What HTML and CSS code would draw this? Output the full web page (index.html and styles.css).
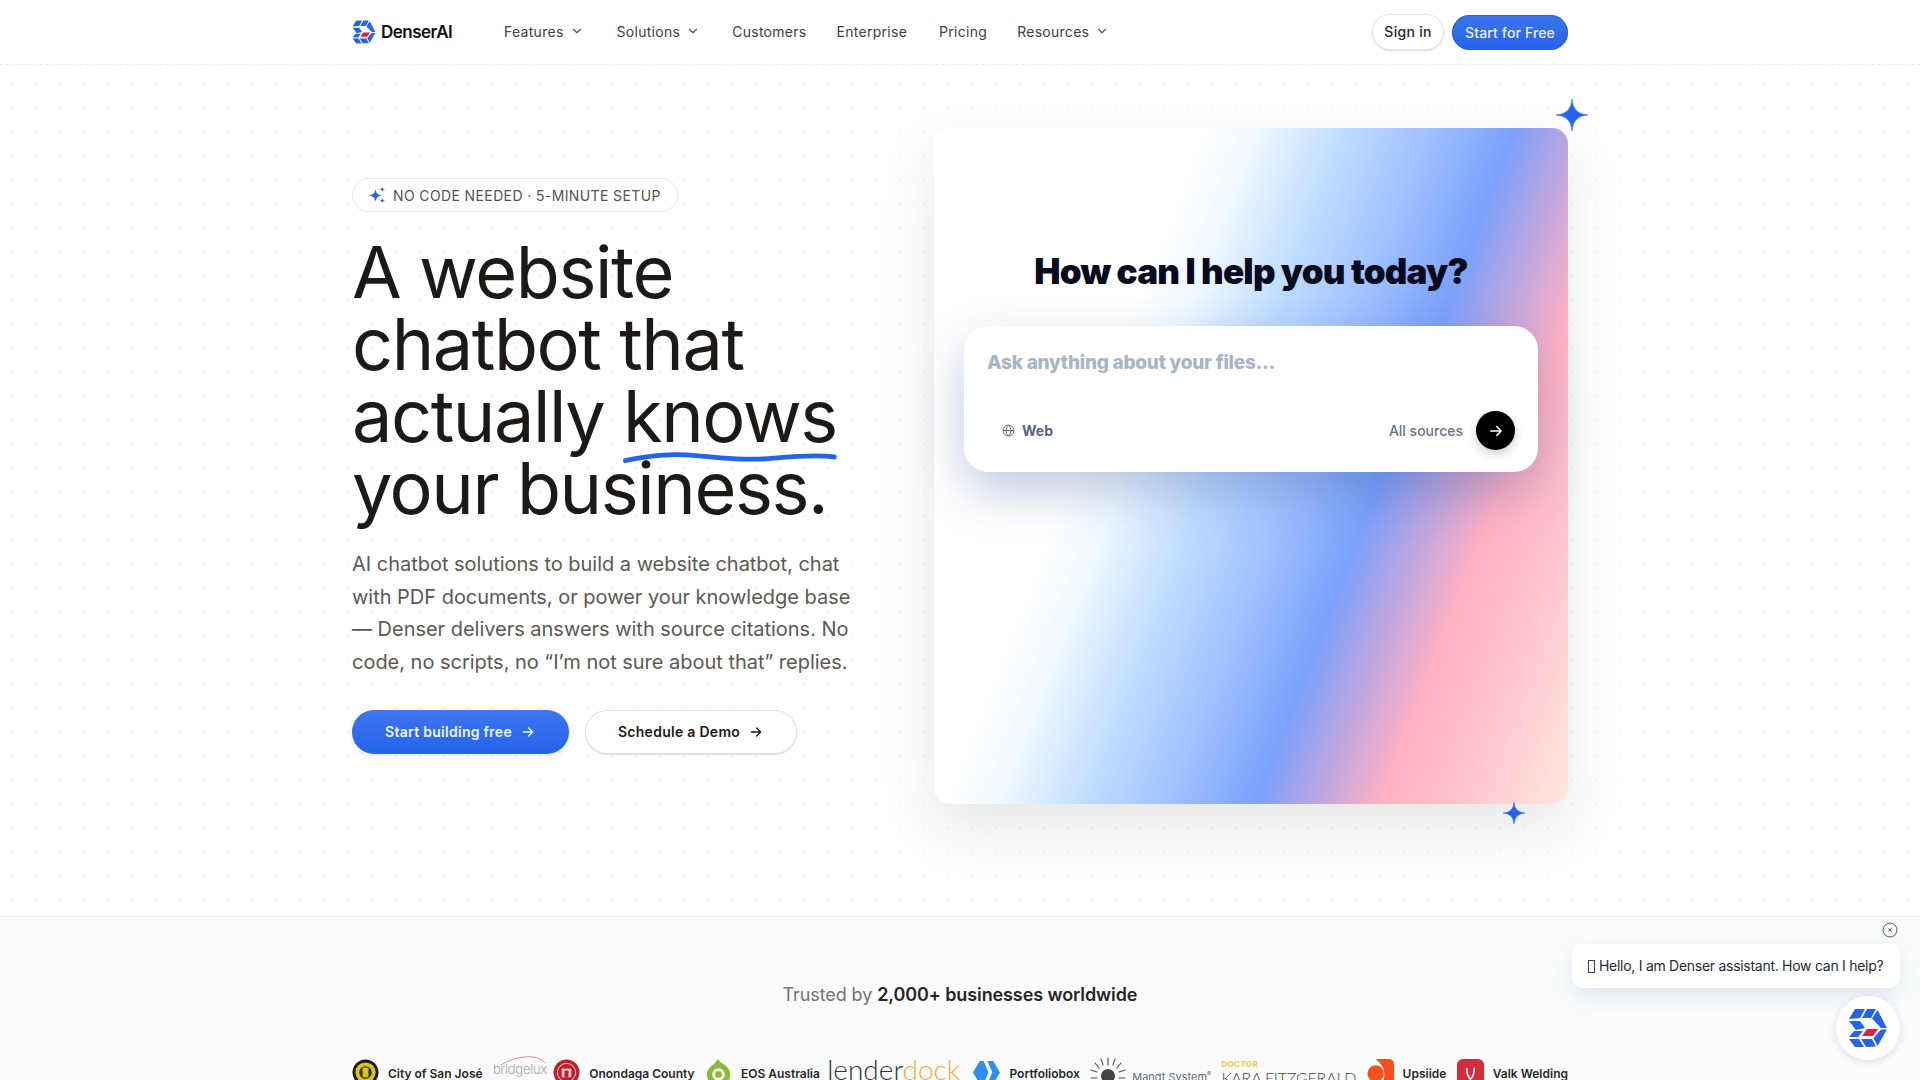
FILE: index.html
```html
<!DOCTYPE html>
<html lang="en">
<head>
    <meta charset="UTF-8">
    <meta name="viewport" content="width=device-width, initial-scale=1.0">
    <title>DenserAI</title>
    <link rel="stylesheet" href="styles.css">
</head>
<body>
    <div class="page">
        <svg width="0" height="0" class="defs">
            <defs>
                <g id="denser-logo">
                    <path fill="#2563eb" d="M1 11 7 1h10l-5 9zM19 1h9l-5 9h-9zM29.500 2 39 20h-6l-9-9.500zM1 13h11l5 7-9 2zM1 29l5-6h9l-5 6zM33 21.500h6L29.500 38 25.500 30zM1 31h10l5 8H7zM13 31h11l4 7.500-10 .5z"/>
                    <path fill="#e11d48" d="M14 28l5-7h11l-5 7z"/>
                </g>
                <path id="arrow-right" d="M5 12h14M13 6l6 6-6 6" fill="none" stroke="currentColor" stroke-width="2" stroke-linecap="round" stroke-linejoin="round"/>
                <path id="chevron" d="M6 9l6 6 6-6" fill="none" stroke="currentColor" stroke-width="2" stroke-linecap="round" stroke-linejoin="round"/>
                <path id="sparkle" d="M12 0Q12.600 11.400 24 12 12.600 12.600 12 24 11.400 12.600 0 12 11.400 11.400 12 0z" fill="#2563eb" stroke="#2563eb" stroke-width=".4"/>
            </defs>
        </svg>

        <header class="site-nav">
            <div class="nav-inner">
                <a class="brand" href="#">
                    <svg class="brand-icon" viewBox="0 0 40 40"><use href="#denser-logo"/></svg>
                    <span class="brand-name">DenserAI</span>
                </a>
                <nav class="nav-links">
                    <a href="#" class="nav-link nav-features">Features <svg class="chevron" viewBox="0 0 24 24"><use href="#chevron"/></svg></a>
                    <a href="#" class="nav-link nav-solutions">Solutions <svg class="chevron" viewBox="0 0 24 24"><use href="#chevron"/></svg></a>
                    <a href="#" class="nav-link nav-customers">Customers</a>
                    <a href="#" class="nav-link nav-enterprise">Enterprise</a>
                    <a href="#" class="nav-link nav-pricing">Pricing</a>
                    <a href="#" class="nav-link">Resources <svg class="chevron" viewBox="0 0 24 24"><use href="#chevron"/></svg></a>
                </nav>
                <div class="nav-actions">
                    <a href="#" class="sign-in">Sign in</a>
                    <a href="#" class="start-free">Start for Free</a>
                </div>
            </div>
        </header>

        <section class="hero">
            <div class="hero-inner">
                <div class="hero-copy">
                    <div class="badge">
                        <svg class="badge-icon" viewBox="0 0 24 24" fill="#2563eb">
                            <path d="M10 4c.8 5.500 3 7.700 8.500 8.500C13 13.300 10.800 15.500 10 21 9.200 15.500 7 13.300 1.500 12.500 7 11.700 9.200 9.500 10 4z"/>
                            <path d="M19 1c.3 2.300 1.200 3.200 3.500 3.500C20.200 4.800 19.300 5.700 19 8 18.700 5.700 17.800 4.800 15.500 4.500 17.800 4.200 18.700 3.300 19 1z"/>
                            <path d="M19 16c.3 2.300 1.200 3.200 3.500 3.500-2.300.3-3.200 1.200-3.500 3.500-.3-2.300-1.200-3.200-3.500-3.500 2.300-.3 3.200-1.200 3.500-3.500z"/>
                        </svg>
                        NO CODE NEEDED · 5-MINUTE SETUP
                    </div>
                    <h1 class="hero-title">A website<br>chatbot that<br>actually <span class="underlined">knows<svg class="squiggle" viewBox="0 0 212 10" preserveAspectRatio="none"><path d="M2 8C30 3 50 2 75 4s50 4 75 2 45-3 60-1" fill="none" stroke="#2563eb" stroke-width="4" stroke-linecap="round"/></svg></span><br>your business.</h1>
                    <p class="hero-text">AI chatbot solutions to build a website chatbot, chat with PDF documents, or power your knowledge base — Denser delivers answers with source citations. No code, no scripts, no “I’m not sure about that” replies.</p>
                    <div class="hero-buttons">
                        <a href="#" class="btn btn-primary">Start building free <svg class="btn-arrow" viewBox="0 0 24 24"><use href="#arrow-right"/></svg></a>
                        <a href="#" class="btn btn-secondary">Schedule a Demo <svg class="btn-arrow" viewBox="0 0 24 24"><use href="#arrow-right"/></svg></a>
                    </div>
                </div>

                <div class="demo-wrap">
                    <svg class="spark spark-top" viewBox="0 0 24 24"><use href="#sparkle"/></svg>
                    <svg class="spark spark-bottom" viewBox="0 0 24 24"><use href="#sparkle"/></svg>
                    <div class="demo-card">
                        <h2 class="demo-title">How can I help you today?</h2>
                        <div class="demo-panel">
                            <div class="demo-placeholder">Ask anything about your files...</div>
                            <div class="demo-row">
                                <span class="demo-web">
                                    <svg class="globe" viewBox="0 0 24 24" fill="none" stroke="currentColor" stroke-width="1.800"><circle cx="12" cy="12" r="10"/><path d="M2 12h20M12 2c-6 6.500-6 13.500 0 20M12 2c6 6.500 6 13.500 0 20"/></svg>
                                    Web
                                </span>
                                <span class="demo-sources">All sources</span>
                                <span class="demo-send"><svg viewBox="0 0 24 24"><use href="#arrow-right"/></svg></span>
                            </div>
                        </div>
                    </div>
                </div>
            </div>
        </section>

        <section class="trusted">
            <p class="trusted-line">Trusted by <strong>2,000+ businesses worldwide</strong></p>
            <div class="logo-row">
                <div class="logo-item">
                    <svg class="logo-mark" viewBox="0 0 28 28"><circle cx="14" cy="14" r="13.500" fill="#1a1a12"/><circle cx="14" cy="14" r="10.500" fill="#d9c31c"/><circle cx="14" cy="14" r="6.500" fill="#3a3512"/><path d="M11 9h6v10h-6z" fill="#d9c31c"/></svg>
                    <span>City of San José</span>
                </div>
                <div class="logo-bridgelux">
                    <svg viewBox="0 0 54 10" class="bridgelux-arc"><path d="M8 10C22 1 44-2 52 8" fill="none" stroke="#c9707c" stroke-width=".8"/></svg>
                    bridgelux
                </div>
                <div class="logo-item">
                    <svg class="logo-mark" viewBox="0 0 28 28"><circle cx="14" cy="14" r="13.500" fill="#b8212f"/><circle cx="14" cy="14" r="9.500" fill="none" stroke="#f3c9cc" stroke-width="1"/><path d="M9 10h10v9H9z" fill="#f3c9cc"/><path d="M12 12h4v7h-4z" fill="#b8212f"/></svg>
                    <span>Onondaga County</span>
                </div>
                <div class="logo-item">
                    <svg class="logo-mark" viewBox="0 0 28 28"><path d="M13 0c2 4 12 6 13 15 1 8-5 13-12 13S2 23 2 16C2 8 10 7 13 0z" fill="#8cb83a"/><circle cx="14" cy="16" r="6.500" fill="#fff"/><circle cx="14" cy="16" r="3.500" fill="#8cb83a"/></svg>
                    <span>EOS Australia</span>
                </div>
                <div class="logo-lender">lender<span class="lender-accent">dock</span></div>
                <div class="logo-item">
                    <svg class="logo-mark" viewBox="0 0 28 28"><path d="M7 2h14l7 12-7 12H7L0 14z" fill="#2f8cf0"/><path d="M11 2h4l5 12-5 12h-4l5-12z" fill="#fff"/></svg>
                    <span>Portfoliobox</span>
                </div>
                <div class="logo-mandt">
                    <svg class="mandt-rays" viewBox="0 0 36 30"><g stroke="#555" stroke-width="1.200" stroke-linecap="round"><path d="M18 1v7M11 2l2 6M25 2l-2 6M5 6l4 5M31 6l-4 5M1 13l6 2M35 13l-6 2M1 21h6M35 21h-6"/></g><circle cx="18" cy="19" r="7" fill="#444"/></svg>
                    <span>Mandt System<sup class="reg">®</sup></span>
                </div>
                <div class="logo-kara">
                    <span class="kara-top">DOCTOR</span>
                    <span class="kara-name">KARA FITZGERALD</span>
                </div>
                <div class="logo-item">
                    <svg class="logo-mark" viewBox="0 0 28 28"><path d="M9 0h14a5 5 0 0 1 5 5v18a5 5 0 0 1-5 5H9c7 0 9-6 9-12 0-8-4-11-9-16z" fill="#f4511e"/><circle cx="9" cy="15" r="8.500" fill="#f4511e"/></svg>
                    <span>Upsiide</span>
                </div>
                <div class="logo-item">
                    <svg class="logo-mark" viewBox="0 0 28 28"><rect width="28" height="28" rx="6" fill="#d52b3c"/><path d="M10 9c0 6 2 10 4 12 2-2 4-6 4-12" fill="none" stroke="#fff" stroke-width="1.600"/></svg>
                    <span>Valk Welding</span>
                </div>
            </div>
        </section>

        <div class="chat-widget">
            <svg class="chat-close" viewBox="0 0 24 24" fill="none" stroke="#44403c" stroke-width="1.300"><circle cx="12" cy="12" r="10.500"/><path d="M9.500 9.500l5 5M14.500 9.500l-5 5"/></svg>
            <div class="chat-bubble"><span class="tofu"></span>Hello, I am Denser assistant. How can I help?</div>
            <div class="chat-launcher"><svg viewBox="0 0 40 40"><use href="#denser-logo"/></svg></div>
        </div>
    </div>
</body>
</html>
```

FILE: styles.css
```css
html, body {
    margin: 0;
    padding: 0;
}
body {
    font-family: "Inter", "Liberation Sans", sans-serif;
    color: #1c1917;
    background-color: #fff;
}
a {
    color: inherit;
    text-decoration: none;
}
.page {
    position: relative;
    height: 100vh;
    overflow: hidden;
    background-image: radial-gradient(circle at center, #f5f5f5 1px, transparent 1.5px);
    background-size: 24px 24px;
}
.defs {
    display: block;
    height: 0;
}

/* nav */
.site-nav {
    height: 64px;
    border-bottom: 1px dashed #ebebeb;
    background-color: #fff;
    box-sizing: content-box;
}
.nav-inner {
    width: 1216px;
    height: 64px;
    margin: 0 auto;
    display: flex;
    align-items: center;
}
.brand {
    display: flex;
    align-items: center;
    gap: 5px;
    width: 152px;
}
.brand-icon {
    width: 24px;
    height: 24px;
}
.brand-name {
    font-size: 17px;
    font-weight: 600;
    letter-spacing: -0.03em;
    color: #111;
}
.nav-links {
    display: flex;
    align-items: center;
    flex: 1;
    padding-bottom: 2px;
    font-size: 14px;
    letter-spacing: 0.02em;
    color: #44403c;
}
.nav-link {
    display: flex;
    align-items: center;
    gap: 6px;
}
.nav-features { margin-right: 33px; }
.nav-solutions { margin-right: 32px; }
.nav-customers { margin-right: 30px; }
.nav-enterprise { margin-right: 32px; }
.nav-pricing { margin-right: 30px; }
.chevron {
    width: 14px;
    height: 14px;
    color: #57534e;
}
.nav-actions {
    display: flex;
    align-items: center;
    gap: 8px;
    font-size: 14px;
    font-weight: 500;
    letter-spacing: 0.01em;
}
.sign-in {
    width: 70px;
    height: 34px;
    line-height: 34px;
    text-align: center;
    border: 1px solid #e7e5e4;
    border-radius: 999px;
    background-color: #fff;
    color: #292524;
    font-weight: 450;
    letter-spacing: 0.02em;
    box-shadow: 0 1px 2px rgba(0, 0, 0, 0.12);
}
.start-free {
    width: 116px;
    height: 35px;
    line-height: 35px;
    text-align: center;
    border-radius: 999px;
    color: #eef4ff;
    background: linear-gradient(#3b74ec, #2563eb);
    box-shadow: inset 0 0 0 1px rgba(37, 88, 200, 0.6);
}

/* hero */
.hero {
    padding: 63px 0 112px;
}
.hero-inner {
    width: 1216px;
    margin: 0 auto;
    display: flex;
    align-items: center;
    justify-content: space-between;
}
.hero-copy {
    width: 520px;
}
.badge {
    display: inline-flex;
    align-items: center;
    gap: 7px;
    height: 32px;
    padding: 0 16px 0 15px;
    border: 1px solid #e7e5e4;
    border-radius: 999px;
    background-color: #fff;
    font-size: 14px;
    letter-spacing: 0.38px;
    color: #57534e;
}
.badge-icon {
    width: 18px;
    height: 18px;
}
.hero-title {
    margin: 24px 0 0;
    font-size: 72px;
    line-height: 72px;
    font-weight: 400;
    letter-spacing: -0.02em;
    color: #1c1917;
}
.underlined {
    position: relative;
    display: inline-block;
}
.squiggle {
    position: absolute;
    left: 0;
    bottom: -11px;
    width: 100%;
    height: 12px;
}
.hero-text {
    margin: 24px 0 0;
    font-size: 20px;
    line-height: 32.5px;
    letter-spacing: -0.02px;
    color: #5c5855;
}
.hero-buttons {
    display: flex;
    gap: 16px;
    margin-top: 32px;
}
.btn {
    display: flex;
    align-items: center;
    justify-content: center;
    gap: 8px;
    height: 44px;
    box-sizing: border-box;
    padding-bottom: 1px;
    border-radius: 999px;
    font-size: 14px;
    font-weight: 600;
    letter-spacing: 0.02em;
}
.btn-primary {
    width: 217px;
    color: #f2f6ff;
    background: linear-gradient(#3d76ef, #2563eb);
    box-shadow: 0 2px 6px rgba(37, 99, 235, 0.15);
}
.btn-secondary {
    width: 212px;
    color: #1c1917;
    background-color: #fff;
    border: 1px solid #e0dfde;
    box-shadow: 0 1px 1px rgba(0, 0, 0, 0.12);
}
.btn-arrow {
    width: 16px;
    height: 16px;
}

/* demo card */
.demo-wrap {
    position: relative;
    width: 634px;
}
.spark {
    position: absolute;
    z-index: 1;
}
.spark-top {
    top: -29px;
    right: -20px;
    width: 32px;
    height: 32px;
}
.spark-bottom {
    bottom: -20px;
    right: 43px;
    width: 22px;
    height: 22px;
}
.demo-card {
    height: 676px;
    box-sizing: border-box;
    padding: 122px 30px 0;
    border-radius: 16px;
    background: linear-gradient(111deg, #fff 0%, #fff 30%, #f0f9ff 36%, #bfdcff 46%, #9dbfff 56%, #7ba1fb 65%, #b5a5e3 71%, #ffb0c3 79%, #ffc4d0 88%, #ffe8df 100%);
    box-shadow: 0 24px 60px rgba(0, 0, 0, 0.1);
}
.demo-title {
    margin: 0;
    text-align: center;
    font-size: 35px;
    line-height: 42px;
    font-weight: 900;
    letter-spacing: -0.8px;
    color: #050a1c;
}
.demo-panel {
    margin-top: 34px;
    height: 146px;
    box-sizing: border-box;
    padding: 25px 23px 0;
    border-radius: 24px;
    background-color: #fff;
    box-shadow: 0 20px 50px rgba(50, 80, 150, 0.3);
}
.demo-placeholder {
    font-size: 19px;
    line-height: 24px;
    font-weight: 800;
    letter-spacing: -0.25px;
    color: #a9b4c4;
}
.demo-row {
    display: flex;
    align-items: center;
    margin-top: 36px;
}
.demo-web {
    display: flex;
    align-items: center;
    gap: 7px;
    flex: 1;
    padding-left: 15px;
    font-size: 14px;
    font-weight: 700;
    color: #5b6478;
}
.globe {
    width: 13px;
    height: 13px;
}
.demo-sources {
    font-size: 14px;
    font-weight: 500;
    color: #6b7280;
}
.demo-send {
    display: flex;
    align-items: center;
    justify-content: center;
    width: 39px;
    height: 39px;
    margin-left: 13px;
    border-radius: 50%;
    color: #fff;
    background-color: #000;
    box-shadow: 0 4px 10px rgba(0, 0, 0, 0.2);
}
.demo-send svg {
    width: 18px;
    height: 18px;
}

/* trusted by */
.trusted {
    height: 300px;
    padding-top: 64px;
    box-sizing: border-box;
    border-top: 1px solid #f0f1f1;
    background-color: #fafcfc;
}
.trusted-line {
    margin: 0;
    text-align: center;
    font-size: 18px;
    line-height: 28px;
    letter-spacing: -0.1px;
    color: #78716c;
}
.trusted-line strong {
    font-weight: 600;
    color: #292524;
}
.logo-row {
    width: 1216px;
    height: 30px;
    margin: 48px auto 0;
    display: flex;
    align-items: flex-start;
    justify-content: space-between;
}
.logo-item {
    display: flex;
    align-items: center;
    gap: 9px;
    height: 30px;
    font-size: 12px;
    font-weight: 600;
    color: #27272a;
    white-space: nowrap;
}
.logo-item span {
    padding-top: 2px;
}
.logo-mark {
    width: 27px;
    height: 27px;
    flex: none;
}
.logo-bridgelux {
    position: relative;
    width: 50px;
    padding-top: 4px;
    font-size: 13px;
    font-weight: 300;
    letter-spacing: -0.02em;
    color: #a3a3a3;
}
.bridgelux-arc {
    position: absolute;
    top: -2px;
    left: 0;
    width: 54px;
    height: 10px;
}
.logo-lender {
    margin: -5px 3px 0 -3px;
    font-family: "Lato", sans-serif;
    font-size: 28px;
    font-weight: 300;
    color: #333;
}
.lender-accent {
    color: #f5a93c;
}
.logo-mandt {
    display: flex;
    align-items: flex-start;
    gap: 6px;
    font-size: 11px;
    color: #5f6b78;
    white-space: nowrap;
}
.logo-mandt span {
    padding-top: 13px;
}
.reg {
    font-size: 6px;
}
.mandt-rays {
    width: 36px;
    height: 30px;
    flex: none;
}
.logo-kara {
    display: flex;
    flex-direction: column;
    margin-top: 3px;
    white-space: nowrap;
}
.kara-top {
    font-size: 8px;
    line-height: 8px;
    font-weight: 700;
    letter-spacing: 0.05em;
    color: #f2c744;
}
.kara-name {
    font-family: "Lato", sans-serif;
    font-size: 16px;
    line-height: 20px;
    font-weight: 300;
    letter-spacing: -0.2px;
    color: #444;
}

/* chat widget */
.chat-widget {
    position: absolute;
    top: 922px;
    right: 20px;
    display: flex;
    flex-direction: column;
    align-items: flex-end;
}
.chat-close {
    width: 16px;
    height: 16px;
    margin-right: 2px;
}
.chat-bubble {
    display: flex;
    align-items: center;
    gap: 4px;
    margin-top: 6px;
    width: 328px;
    height: 44px;
    box-sizing: border-box;
    padding: 0 0 2px 16px;
    border-radius: 10px;
    background-color: #fff;
    font-size: 14px;
    letter-spacing: -0.02em;
    color: #1f2937;
    white-space: nowrap;
    box-shadow: 0 8px 24px rgba(70, 100, 170, 0.14);
}
.tofu {
    width: 5px;
    height: 11px;
    margin-top: 2px;
    border: 1px solid #444;
}
.chat-launcher {
    display: flex;
    align-items: center;
    justify-content: center;
    width: 64px;
    height: 64px;
    margin-top: 8px;
    border-radius: 50%;
    background-color: #fff;
    box-shadow: 0 2px 10px rgba(0, 0, 0, 0.12);
}
.chat-launcher svg {
    width: 40px;
    height: 40px;
}
```
